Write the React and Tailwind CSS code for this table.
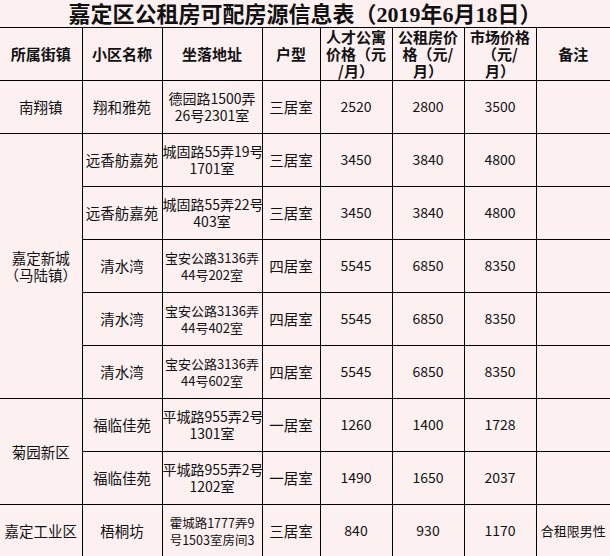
import React from "react";

const rows = [
  { town: ["南翔镇"], span: 1, name: "翔和雅苑", addr: ["德园路1500弄", "26号2301室"], size: "text-[14px]", type: "三居室", a: "2520", b: "2800", c: "3500", note: "" },
  { town: ["嘉定新城", "（马陆镇）"], span: 5, name: "远香舫嘉苑", addr: ["城固路55弄19号", "1701室"], size: "text-[14px]", type: "三居室", a: "3450", b: "3840", c: "4800", note: "" },
  { name: "远香舫嘉苑", addr: ["城固路55弄22号", "403室"], size: "text-[14px]", type: "三居室", a: "3450", b: "3840", c: "4800", note: "" },
  { name: "清水湾", addr: ["宝安公路3136弄", "44号202室"], size: "text-[13px]", type: "四居室", a: "5545", b: "6850", c: "8350", note: "" },
  { name: "清水湾", addr: ["宝安公路3136弄", "44号402室"], size: "text-[13px]", type: "四居室", a: "5545", b: "6850", c: "8350", note: "" },
  { name: "清水湾", addr: ["宝安公路3136弄", "44号602室"], size: "text-[13px]", type: "四居室", a: "5545", b: "6850", c: "8350", note: "" },
  { town: ["菊园新区"], span: 2, name: "福临佳苑", addr: ["平城路955弄2号", "1301室"], size: "text-[14px]", type: "一居室", a: "1260", b: "1400", c: "1728", note: "" },
  { name: "福临佳苑", addr: ["平城路955弄2号", "1202室"], size: "text-[14px]", type: "一居室", a: "1490", b: "1650", c: "2037", note: "" },
  { town: ["嘉定工业区"], span: 1, name: "梧桐坊", addr: ["霍城路1777弄9", "号1503室房间3"], size: "text-[12.5px]", type: "三居室", a: "840", b: "930", c: "1170", note: "合租限男性" },
];

const cell = "border border-black p-0 text-center align-middle";

const App = () => {
  return (
    <div className="w-[610px] h-[556px] overflow-hidden bg-[#fcf0f1] text-[#111] font-['Noto_Sans_CJK_SC',sans-serif]">
      <table className="w-[610px] table-fixed border-collapse border-hidden">
        <colgroup>
          <col className="w-[82px]" />
          <col className="w-[80px]" />
          <col className="w-[100px]" />
          <col className="w-[58px]" />
          <col className="w-[72px]" />
          <col className="w-[72px]" />
          <col className="w-[72px]" />
          <col className="w-[74px]" />
        </colgroup>
        <tbody>
          <tr className="h-[27px]">
            <td colSpan={8} className="border-b border-black p-0 pt-[3px] text-center text-[22px] leading-none font-bold font-['Liberation_Serif','Noto_Sans_CJK_SC',serif]">
              嘉定区公租房可配房源信息表（2019年6月18日）
            </td>
          </tr>
          <tr className="h-[53px] text-[15px] font-bold leading-[17px]">
            <td className={cell}>所属街镇</td>
            <td className={cell}>小区名称</td>
            <td className={cell}>坐落地址</td>
            <td className={cell}>户型</td>
            <td className={cell}>人才公寓<br />价格（元<br />/月）</td>
            <td className={cell}>公租房价<br />格（元/<br />月）</td>
            <td className={cell}>市场价格<br />（元/<br />月）</td>
            <td className={cell}>备注</td>
          </tr>
          {rows.map((r, i) => (
            <tr key={i} className="h-[53px] text-[14.5px] leading-[17px]">
              {r.town ? (
                <td rowSpan={r.span} className={cell}>
                  {r.town.map((t, j) => (
                    <div key={j} className="whitespace-nowrap">{t}</div>
                  ))}
                </td>
              ) : null}
              <td className={cell}>{r.name}</td>
              <td className={`${cell} ${r.size} whitespace-nowrap`}>
                {r.addr[0]}<br />{r.addr[1]}
              </td>
              <td className={cell}>{r.type}</td>
              <td className={`${cell} text-[14px]`}>{r.a}</td>
              <td className={`${cell} text-[14px]`}>{r.b}</td>
              <td className={`${cell} text-[14px]`}>{r.c}</td>
              <td className={`${cell} text-[13px] whitespace-nowrap`}>{r.note}</td>
            </tr>
          ))}
        </tbody>
      </table>
    </div>
  );
};

export default App;
